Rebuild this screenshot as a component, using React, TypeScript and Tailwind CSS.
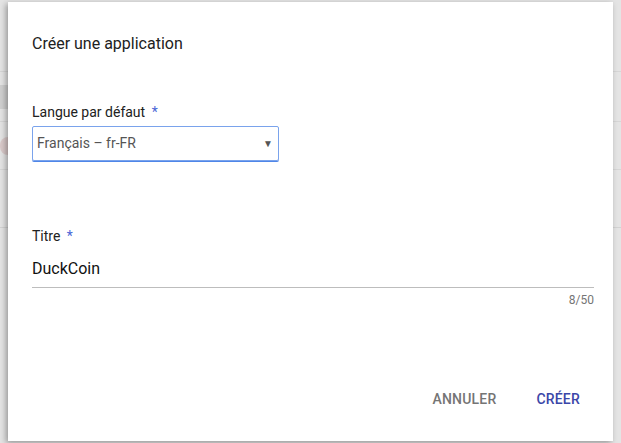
import React from 'react';

export default function App() {
  return (
    <div
      className="relative w-[621px] h-[443px] overflow-hidden bg-[#e4e4e4]"
      style={{ fontFamily: 'Roboto, "Liberation Sans", sans-serif' }}
    >
      {/* page dimmed behind the dialog */}
      <div className="absolute inset-0 flex flex-col">
        <div className="h-[72px] border-b border-[#d6d6d6]" />
        <div className="h-[50px] border-b border-[#d6d6d6] flex items-center">
          <div className="w-[10px] h-[24px] bg-[#cfcfcf]" />
        </div>
        <div className="h-[48px] border-b border-[#d6d6d6] flex items-center">
          <div className="w-[16px] h-[18px] rounded-full bg-[#d9c9c9]" />
        </div>
        <div className="h-[58px] border-b border-[#d2d2d2]" />
      </div>

      <div className="absolute left-[8px] top-[2px] w-[605px] h-[439px] bg-white shadow-[-2px_2px_6px_rgba(0,0,0,0.35)] flex flex-col">
        <h2 className="pl-[24px] pt-[32px] text-[16px] leading-[20px] text-[#212121]">
          Créer une application
        </h2>

        <div className="pl-[24px] pt-[49px]">
          <label className="block text-[14px] leading-[18px] text-[#212121]">
            Langue par défaut <span className="text-[#4a66d6] ml-[3px]">*</span>
          </label>
          <div className="mt-[5px] w-[247px] h-[35px] border border-[#7aa3ec] rounded-[2px] flex items-center justify-between pl-[4px] pr-[5px] shadow-[0_1px_0_#4f86e8]">
            <span className="text-[14px] text-[#555555]">Français – fr-FR</span>
            <span className="text-[10px] text-[#555555]">▼</span>
          </div>
        </div>

        <div className="pl-[24px] pr-[19px] pt-[66px]">
          <label className="block text-[14px] leading-[18px] text-[#212121]">
            Titre <span className="text-[#4a66d6] ml-[3px]">*</span>
          </label>
          <div className="mt-[14px] pb-[8px] border-b border-[#bdbdbd] text-[16px] leading-[20px] text-[#111111]">
            DuckCoin
          </div>
          <div className="mt-[5px] text-right text-[12px] leading-[14px] text-[#757575]">8/50</div>
        </div>

        <div className="mt-auto mb-[31px] flex justify-end items-center gap-[40px] pr-[33px]">
          <button className="text-[14px] font-medium text-[#757575] tracking-[0.2px]">ANNULER</button>
          <button className="text-[14px] font-medium text-[#3b46a8] tracking-[0.2px]">CRÉER</button>
        </div>
      </div>
    </div>
  );
}
